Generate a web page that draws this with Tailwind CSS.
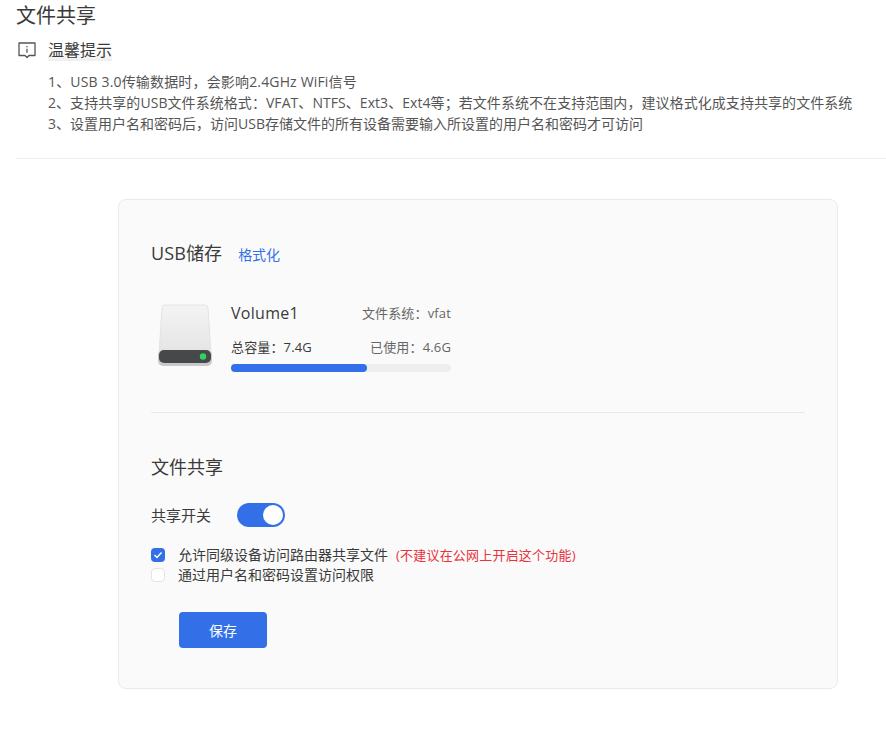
<!DOCTYPE html>
<html lang="zh-CN">
<head>
    <meta charset="UTF-8">
    <meta name="viewport" content="width=device-width, initial-scale=1.0">
    <title>文件共享</title>
    <script src="https://cdn.jsdelivr.net/npm/@tailwindcss/browser@4"></script>
</head>
<body class="bg-white text-[#3a3a3a] font-['Open_Sans','Noto_Sans_CJK_SC',sans-serif]">
    <div class="w-[886px] h-[734px] overflow-hidden pl-4">
        <h1 class="text-[20px] leading-[30px] pt-px font-normal">文件共享</h1>

        <!-- 温馨提示 -->
        <div class="flex items-center mt-[4px] h-[30px]">
            <svg class="ml-[1px] w-[20px] h-[20px]" viewBox="0 0 20 20" fill="none" stroke="#555" stroke-width="1.3">
                <path d="M2 3h16v12.5h-6l-2 2-2-2h-6z" stroke-linejoin="round"/>
                <path d="M10 6v1.3M10 8.7v4"/>
            </svg>
            <span class="ml-[11px] text-[16px] leading-[22px] bg-gradient-to-b from-white from-60% to-[#eeeeee]">温馨提示</span>
        </div>
        <ol class="pl-8 mt-[6px] text-[14px] leading-[21px] text-[#555]">
            <li class="tracking-[0.16px]">1、USB 3.0传输数据时，会影响2.4GHz WiFi信号</li>
            <li class="tracking-[0.06px]">2、支持共享的USB文件系统格式：VFAT、NTFS、Ext3、Ext4等；若文件系统不在支持范围内，建议格式化成支持共享的文件系统</li>
            <li>3、设置用户名和密码后，访问USB存储文件的所有设备需要输入所设置的用户名和密码才可访问</li>
        </ol>
        <div class="mt-6 border-t border-[#eeeeee]"></div>

        <!-- 卡片 -->
        <div class="ml-[102px] mt-10 w-[720px] h-[490px] bg-[#fafafa] border border-[#eaeaea] rounded-lg px-8">
            <div class="flex items-baseline pt-[38px]">
                <h2 class="text-[18px] leading-[30px] font-normal tracking-[0.1px]">USB储存</h2>
                <a class="ml-4 text-[14px] text-[#3370e8]">格式化</a>
            </div>

            <div class="flex mt-[31px] h-[75px]">
                <svg class="ml-[6px] mt-[5px] w-[56px] h-[63px]" viewBox="0 0 56 63">
                    <defs>
                        <linearGradient id="driveBody" x1="0" y1="0" x2="0" y2="1">
                            <stop offset="0" stop-color="#f4f4f4"/>
                            <stop offset="1" stop-color="#e4e4e4"/>
                        </linearGradient>
                    </defs>
                    <path d="M5 4a3 3 0 0 1 3-3h40a3 3 0 0 1 3 3l3 46H2z" fill="url(#driveBody)" stroke="#e4e4e4"/>
                    <rect x="1" y="46" width="54" height="16" rx="5" fill="#c9c9c9"/>
                    <rect x="2" y="46" width="52" height="13" rx="5" fill="#47484a"/>
                    <circle cx="46" cy="52.5" r="3.2" fill="#2bd35f"/>
                </svg>
                <div class="ml-[18px] w-[220px]">
                    <div class="flex justify-between items-center h-[30px] -mt-[1px]">
                        <span class="text-[16px] tracking-[0.3px]">Volume1</span>
                        <span class="mt-[2px] text-[13px] tracking-[0.15px] text-[#666]">文件系统：vfat</span>
                    </div>
                    <div class="flex justify-between items-center h-[20px] mt-[10px] text-[13px] tracking-[0.15px]">
                        <span>总容量：7.4G</span>
                        <span class="text-[#666]">已使用：4.6G</span>
                    </div>
                    <div class="mt-[6px] h-2 rounded-full bg-[#eeeeee]">
                        <div class="h-2 rounded-full bg-[#3370e8]" style="width: 62%"></div>
                    </div>
                </div>
            </div>

            <div class="mt-[38px] border-t border-[#e8e8e8]"></div>

            <h2 class="mt-[39px] text-[18px] leading-[30px] font-normal">文件共享</h2>

            <div class="flex items-center mt-[18px] h-[30px]">
                <span class="text-[15px]">共享开关</span>
                <span class="ml-[26px] flex justify-end items-center w-12 h-6 p-[2px] rounded-full bg-[#3370e8]">
                    <span class="w-5 h-5 rounded-full bg-white"></span>
                </span>
            </div>

            <div class="mt-[15px] text-[14px] leading-[20px]">
                <label class="flex items-center h-[20px]">
                    <span class="flex items-center justify-center w-[14px] h-[14px] rounded-sm bg-[#3370e8]">
                        <svg class="w-[10px] h-[10px]" viewBox="0 0 10 10" fill="none" stroke="#fff" stroke-width="1.5"><path d="M1.5 5l2.5 2.5 4.5-5"/></svg>
                    </span>
                    <span class="ml-[13px]">允许同级设备访问路由器共享文件</span>
                    <span class="ml-2 text-[13px] tracking-[0.2px] text-[#e8323c]">(不建议在公网上开启这个功能)</span>
                </label>
                <label class="flex items-center h-[20px]">
                    <span class="w-[14px] h-[14px] rounded-sm bg-white border border-[#e4e4e4]"></span>
                    <span class="ml-[13px]">通过用户名和密码设置访问权限</span>
                </label>
            </div>

            <button class="block ml-7 mt-[27px] w-[88px] h-9 rounded bg-[#3370e8] text-white text-[14px]">保存</button>
        </div>
    </div>
</body>
</html>
